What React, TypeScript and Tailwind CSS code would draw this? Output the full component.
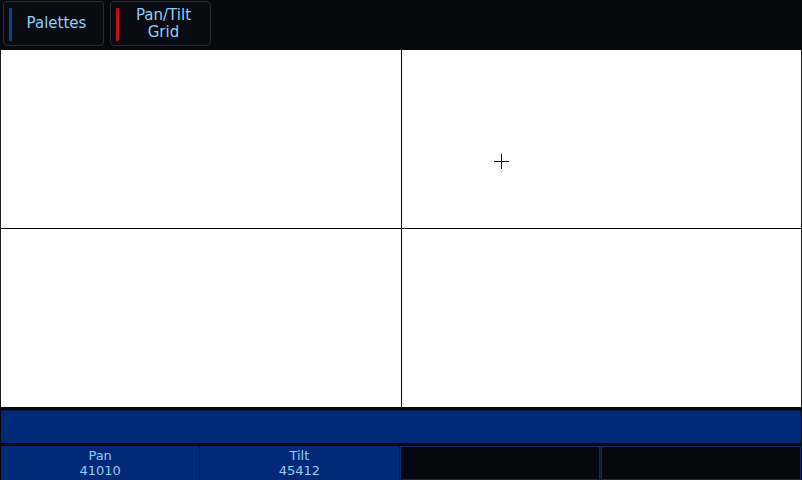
import React from "react";

function TopButton({ stripe, children }: { stripe: string; children: React.ReactNode }) {
  return (
    <div className="relative w-[101px] h-[45px] rounded-[4px] border border-[#2a2c33] bg-[#090a12] flex items-center justify-center">
      <div className={`absolute left-[5px] top-[6px] w-[3px] h-[33px] rounded-[1px] ${stripe}`} />
      <div className="text-[15px] leading-[17px] text-[#8fcdf5] text-center pl-[6px]">{children}</div>
    </div>
  );
}

function Cell({ label, value }: { label: string; value: string }) {
  return (
    <div className="flex-1 bg-[#002a78] flex flex-col items-center justify-center text-[13px] leading-[15px] text-[#8fcdf5]">
      <div>{label}</div>
      <div>{value}</div>
    </div>
  );
}

export default function App() {
  return (
    <div className="w-[802px] h-[480px] bg-[#07080f] flex flex-col overflow-hidden font-['DejaVu_Sans',sans-serif]">
      <div className="h-[50px] flex gap-[6px] pl-[3px] pt-[1px]">
        <TopButton stripe="bg-[#123f8c]">Palettes</TopButton>
        <TopButton stripe="bg-[#c0101a]">
          Pan/Tilt
          <br />
          Grid
        </TopButton>
      </div>
      <div className="h-[357px] bg-[#1a1a1a] px-[1px]">
        <div className="h-full grid grid-cols-[400px_399px] grid-rows-[178px_178px] gap-[1px] bg-black">
          <div className="bg-white" />
          <div className="bg-white relative">
            <svg className="absolute left-[92px] top-[104px]" width="15" height="15" viewBox="0 0 15 15">
              <path d="M7.5 0V15M0 7.5H15" stroke="#000" strokeWidth="1" />
            </svg>
          </div>
          <div className="bg-white" />
          <div className="bg-white" />
        </div>
      </div>
      <div className="h-[3px]" />
      <div className="h-[33px] mx-[1px] bg-[#002a78] border-t border-[#0a1a3a]" />
      <div className="h-[3px]" />
      <div className="h-[34px] mx-[1px] flex bg-[#0b1a33] gap-[1px]">
        <Cell label="Pan" value="41010" />
        <Cell label="Tilt" value="45412" />
        <div className="flex-1 bg-[#07080f] border border-[#0d2c66]" />
        <div className="flex-1 bg-[#07080f] border border-[#0d2c66]" />
      </div>
    </div>
  );
}
